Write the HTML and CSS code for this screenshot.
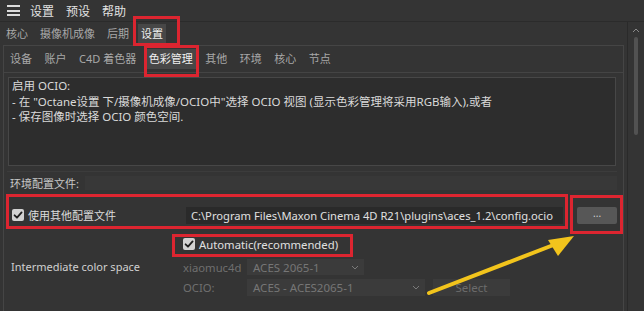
FILE: index.html
```html
<!DOCTYPE html>
<html lang="zh">
<head>
<meta charset="utf-8">
<title>Octane 设置</title>
<link rel="stylesheet" href="styles.css">
</head>
<body>
<div class="menubar">
  <span class="hamburger"><i></i><i></i><i></i></span>
  <span class="menu-item">设置</span>
  <span class="menu-item">预设</span>
  <span class="menu-item">帮助</span>
</div>
<div class="frame">
  <div class="main">
    <div class="tabs tabs1">
      <span class="tab">核心</span>
      <span class="tab">摄像机成像</span>
      <span class="tab">后期</span>
      <span class="tab active">设置</span>
    </div>
    <div class="panel">
      <div class="tabs tabs2">
        <span class="tab">设备</span>
        <span class="tab">账户</span>
        <span class="tab">C4D 着色器</span>
        <span class="tab active">色彩管理</span>
        <span class="tab">其他</span>
        <span class="tab">环境</span>
        <span class="tab">核心</span>
        <span class="tab">节点</span>
      </div>
      <div class="pane">
        <div class="info">
          <div>启用 OCIO:</div>
          <div>- 在 "Octane设置 下/摄像机成像/OCIO中"选择 OCIO 视图 (显示色彩管理将采用RGB输入),或者</div>
          <div>- 保存图像时选择 OCIO 颜色空间.</div>
        </div>
        <div class="group-head"><span class="group-label">环境配置文件:</span><span class="group-line"></span></div>
        <div class="row-config">
          <span class="check"><svg viewBox="0 0 12 12" width="12" height="12"><path d="M2.6 6.3 L5 8.7 L9.6 3.4" fill="none" stroke="#1e1e1e" stroke-width="1.8" stroke-linecap="round" stroke-linejoin="round"/></svg></span>
          <span class="config-label">使用其他配置文件</span>
          <span class="path-input">C:\Program Files\Maxon Cinema 4D R21\plugins\aces_1.2\config.ocio</span>
          <span class="btn-browse">...</span>
        </div>
        <div class="row-inter">
          <span class="inter-label">Intermediate color space</span>
          <div class="inter-grid">
            <div class="auto-row">
              <span class="check"><svg viewBox="0 0 12 12" width="12" height="12"><path d="M2.6 6.3 L5 8.7 L9.6 3.4" fill="none" stroke="#1e1e1e" stroke-width="1.8" stroke-linecap="round" stroke-linejoin="round"/></svg></span>
              <span class="auto-label">Automatic(recommended)</span>
            </div>
            <span class="dim-label">xiaomuc4d</span>
            <div class="ctrl-row">
              <span class="dropdown dd-short">ACES 2065-1<svg class="chev" viewBox="0 0 8 5" width="8" height="5"><path d="M1 1 L4 4 L7 1" fill="none" stroke="#7a7a7a" stroke-width="1"/></svg></span>
            </div>
            <span class="dim-label">OCIO:</span>
            <div class="ctrl-row">
              <span class="dropdown dd-long">ACES - ACES2065-1<svg class="chev" viewBox="0 0 8 5" width="8" height="5"><path d="M1 1 L4 4 L7 1" fill="none" stroke="#7a7a7a" stroke-width="1"/></svg></span>
              <span class="btn-select">Select</span>
            </div>
          </div>
        </div>
      </div>
    </div>
  </div>
  <div class="scrollbar">
    <svg class="scroll-up" viewBox="0 0 8 5" width="8" height="5"><path d="M1 4 L4 1 L7 4" fill="none" stroke="#8a8a8a" stroke-width="1"/></svg>
    <span class="thumb"></span>
  </div>
</div>

<div class="mark mark-tab1"></div>
<div class="mark mark-tab2"></div>
<div class="mark mark-config"></div>
<div class="mark mark-browse"></div>
<div class="mark mark-auto"></div>
<svg class="arrow" viewBox="0 0 644 311" width="644" height="311">
  <line x1="429" y1="293" x2="556" y2="244" stroke="#f2c41c" stroke-width="4" stroke-linecap="round"/>
  <polygon points="574,236 548,240 558,256" fill="#f2c41c"/>
</svg>
</body>
</html>
```

FILE: styles.css
```css
* { box-sizing: border-box; }
html, body { margin: 0; padding: 0; }
body {
  width: 644px;
  height: 311px;
  overflow: hidden;
  position: relative;
  background: #343434;
  color: #d4d4d4;
  font-family: "Noto Sans", "Noto Sans CJK SC", sans-serif;
  font-size: 11px;
}

/* top menu */
.menubar {
  height: 22px;
  display: flex;
  align-items: center;
  padding-left: 7px;
  gap: 12px;
  border-bottom: 1px solid #2b2b2b;
  font-size: 12px;
  color: #e2e2e2;
}
.hamburger {
  width: 13px;
  height: 11px;
  display: flex;
  flex-direction: column;
  justify-content: space-between;
  margin-right: -2px;
}
.hamburger i { display: block; height: 2px; background: #dcdcdc; }

.frame { display: flex; height: 289px; }
.main { width: 628px; border-right: 1px solid #2a2a2a; }

/* tabs */
.tabs { display: flex; align-items: center; gap: 6px; }
.tab { padding: 0 3px; color: #a8a8a8; line-height: 20px; }
.tab.active { background: #474747; color: #f0f0f0; }
.tabs1 { height: 23px; padding-left: 3px; }
.tabs2 { height: 27px; padding-left: 3px; gap: 6.5px; border-bottom: 1px solid #444; }

.panel {
  margin-left: 3px;
  width: 621px;
  height: 266px;
  border: 1px solid #454545;
  border-bottom: none;
}

.pane { padding: 4px 6px 0 3px; }

.info {
  margin-left: 1px;
  width: 608px;
  height: 89px;
  background: #2d2d2d;
  border: 1px solid #474747;
  padding: 0 3px;
  line-height: 15.5px;
  font-size: 11.5px;
  color: #dadada;
}

.group-head {
  margin-top: 5px;
  height: 22px;
  display: flex;
  align-items: center;
  border-top: 1px solid #3c3c3c;
}
.group-label { padding-left: 3px; color: #c8c8c8; }
.group-line { flex: 1; height: 14px; margin-left: 6px; background: #383838; }

.check {
  width: 12px;
  height: 12px;
  border-radius: 2px;
  background: #d2d2d2;
  display: inline-flex;
  flex: none;
}
.check svg { display: block; }

.row-config {
  height: 40px;
  padding-top: 4px;
  display: flex;
  align-items: center;
  padding-left: 5px;
}
.config-label { margin-left: 4px; width: 159px; color: #dcdcdc; }
.path-input {
  width: 380px;
  height: 17px;
  background: #2a2a2a;
  padding-left: 5px;
  font-size: 11.2px;
  line-height: 17px;
  color: #e0e0e0;
  white-space: nowrap;
  overflow: hidden;
}
.btn-browse {
  margin-left: 14px;
  width: 40px;
  height: 17px;
  background: #575757;
  border-radius: 2px;
  text-align: center;
  line-height: 13px;
  color: #cfcfcf;
  font-size: 10px;
}

.row-inter { display: flex; align-items: center; }
.inter-label { width: 176px; padding-left: 4px; padding-top: 3px; font-size: 11px; color: #d0d0d0; }

.inter-grid {
  display: grid;
  grid-template-columns: 64px auto;
  grid-template-rows: 22px 16px 17px;
  row-gap: 4px;
  align-items: center;
}
.auto-row {
  grid-column: 1 / 3;
  display: flex;
  align-items: center;
  gap: 4px;
}
.auto-label { font-size: 11.3px; color: #e0e0e0; }
.dim-label { color: #6f6f6f; font-size: 11.3px; }
.ctrl-row { display: flex; align-items: center; height: 100%; }
.dropdown {
  height: 100%;
  background: #3b3b3b;
  color: #767676;
  font-size: 11.5px;
  padding-left: 6px;
  display: flex;
  align-items: center;
  justify-content: space-between;
  padding-right: 5px;
}
.dd-short { width: 117px; }
.dd-long { width: 178px; }
.chev { display: block; }
.btn-select {
  margin-left: 8px;
  width: 77px;
  height: 100%;
  background: #3b3b3b;
  color: #6c6c6c;
  font-size: 11.5px;
  display: flex;
  align-items: center;
  justify-content: center;
}

/* scrollbar */
.scrollbar {
  width: 16px;
  display: flex;
  flex-direction: column;
  align-items: center;
  padding-top: 6px;
  gap: 4px;
}
.scroll-up { display: block; }
.thumb { width: 4px; height: 98px; border-radius: 2px; background: #525252; }

/* annotations */
.mark { position: absolute; border: 3px solid #dc2530; }
.mark-tab1 { left: 133px; top: 16px; width: 47px; height: 30px; }
.mark-tab2 { left: 144px; top: 45px; width: 55px; height: 32px; }
.mark-config { left: 6px; top: 194px; width: 562px; height: 35px; }
.mark-browse { left: 570px; top: 195px; width: 53px; height: 39px; }
.mark-auto { left: 172px; top: 234px; width: 181px; height: 23px; }
.arrow { position: absolute; left: 0; top: 0; pointer-events: none; }
```
